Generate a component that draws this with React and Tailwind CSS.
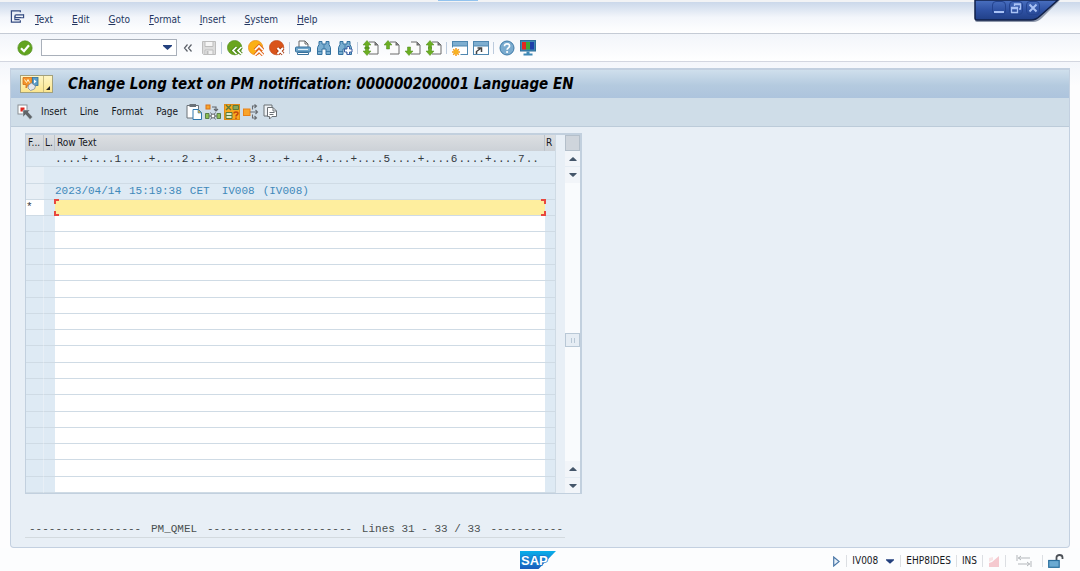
import React, { useState } from 'react'

const menuItems = ['Text', 'Edit', 'Goto', 'Format', 'Insert', 'System', 'Help']
const editorActions = ['Insert', 'Line', 'Format', 'Page']
const rulerMarks = ['1', '2', '3', '4', '5', '6', '7']
const EMPTY_ROWS = 17

const Icon = ({ children, className = 'h-4 w-4' }) => (
  <svg viewBox="0 0 16 16" className={className} fill="none" aria-hidden="true">
    {children}
  </svg>
)

const CheckIcon = () => (
  <Icon>
    <circle cx="8" cy="8" r="7.2" fill="#62a420" stroke="#4d8a1c" strokeWidth="0.6" />
    <path d="M4 8.2l3 3 5-6" stroke="#fff" strokeWidth="2.2" />
  </Icon>
)

const CollapseIcon = () => (
  <Icon>
    <path d="M7.5 4.5L4.5 8l3 3.5M11.5 4.5L8.5 8l3 3.5" stroke="#5b6068" strokeWidth="1.2" />
  </Icon>
)

const SaveIcon = () => (
  <Icon>
    <path d="M1.5 1.5h13v13h-12l-1-1z" fill="#dcdcdc" stroke="#bdbdbd" />
    <path d="M4 1.5h8v5H4z" fill="#f6f6f6" stroke="#bdbdbd" />
    <path d="M4 10h8v4.5H4z" fill="#f0f0f0" stroke="#bdbdbd" />
    <path d="M5.5 11h2v3h-2z" fill="#bdbdbd" />
  </Icon>
)

const BackIcon = () => (
  <Icon>
    <circle cx="7.6" cy="7.6" r="7.2" fill="#6aa51e" stroke="#4e8a1a" strokeWidth="0.6" />
    <path d="M9.5 7L6 10.5 9.5 14M14.5 7L11 10.5l3.5 3.5" stroke="#4e8a1a" strokeWidth="3.4" />
    <path d="M9.5 7L6 10.5 9.5 14M14.5 7L11 10.5l3.5 3.5" stroke="#fff" strokeWidth="1.7" />
  </Icon>
)

const ExitIcon = () => (
  <Icon>
    <circle cx="7.6" cy="7.6" r="7.2" fill="#fbb016" stroke="#e88a1a" strokeWidth="0.7" />
    <path d="M7 10l4-4 4 4M7 15l4-4 4 4" stroke="#e2661c" strokeWidth="3.4" />
    <path d="M7 10l4-4 4 4M7 15l4-4 4 4" stroke="#fff" strokeWidth="1.7" />
  </Icon>
)

const CancelIcon = () => (
  <Icon>
    <circle cx="7.6" cy="7.6" r="7.2" fill="#d9541a" stroke="#b8400f" strokeWidth="0.6" />
    <path d="M8.5 8l5.5 6M14 8l-5.5 6" stroke="#a93a10" strokeWidth="3.8" />
    <path d="M8.5 8l5.5 6M14 8l-5.5 6" stroke="#fff" strokeWidth="2" />
  </Icon>
)

const PrintIcon = () => (
  <Icon>
    <path d="M4 7V1h6l3 3v3" fill="#fff" stroke="#666" />
    <path d="M10 1v3h3" stroke="#666" />
    <rect x="0.5" y="7" width="15" height="5" rx="1" fill="#6fa5ca" stroke="#37719c" />
    <path d="M3 9.5h10" stroke="#dfeef8" />
    <path d="M2.5 12.5h11v2h-11z" fill="#fff" stroke="#37719c" />
  </Icon>
)

const FindIcon = ({ next }) => (
  <Icon>
    <path
      d="M3 1.5h3V4h4V1.5h3v3l1.5 3v7H10V9H6v5.5H1.5v-7l1.5-3z"
      fill="#79add0"
      stroke="#32719f"
    />
    <path d="M8 4.5V9M2 11.5h4M10 11.5h4" stroke="#32719f" strokeWidth="0.8" />
    {next && (
      <path d="M10 6.5h2.5V9H15v3h-2.5v2.5H10V12H7.5V9H10z" fill="#fff" stroke="#3d5fa3" />
    )}
  </Icon>
)

// Page navigation: up / down say which arrow heads are drawn
const PageIcon = ({ up, down, far }) => (
  <Icon>
    <path d="M6 2h6l3 3v9H6" fill="#fbfbfb" stroke="#6a6a6a" />
    <path d="M11.5 2v3.5H15z" fill="#6a6a6a" />
    {up && (
      <path d="M4 0.5L8 5H5.5v4h-3V5H0z" fill="#6cae22" stroke="#4d8a1c" strokeWidth="0.5" />
    )}
    {down && (
      <path d="M4 15.5L8 11H5.5V7h-3v4H0z" fill="#6cae22" stroke="#4d8a1c" strokeWidth="0.5" />
    )}
    {far && <path d="M1 8h6" stroke="#4d8a1c" />}
  </Icon>
)

const SessionIcon = () => (
  <Icon>
    <rect x="0.5" y="1.5" width="15" height="13" fill="#fff" stroke="#4f87b0" />
    <path d="M1 2h14v4H1z" fill="#7eaed0" />
    <path d="M0.5 6h15" stroke="#4f87b0" />
    <path d="M0 7.5h8.5V16H0z" fill="#fff" />
    <path d="M4 8v8M0 12h8M1.2 9.2l5.6 5.6M6.8 9.2l-5.6 5.6" stroke="#f29a1b" strokeWidth="1.5" />
    <circle cx="4" cy="12" r="2.2" fill="#f8b422" />
  </Icon>
)

const ShortcutIcon = () => (
  <Icon>
    <rect x="0.5" y="1.5" width="15" height="13" fill="#fff" stroke="#4f87b0" />
    <path d="M1 2h14v4H1z" fill="#7eaed0" />
    <path d="M0.5 6h15" stroke="#4f87b0" />
    <path d="M3.5 14v-2.5L7.5 8.5M4.5 8h4v4" stroke="#444" strokeWidth="1.5" />
  </Icon>
)

const HelpIcon = () => (
  <Icon>
    <circle cx="8" cy="8" r="7" fill="#7aabcf" stroke="#3f7ba8" />
    <path
      d="M5.5 6.2C5.5 4.5 6.6 3.8 8 3.8s2.6.8 2.6 2.2c0 1.8-2.5 1.9-2.5 3.7"
      stroke="#fff"
      strokeWidth="1.7"
    />
    <circle cx="8.1" cy="12" r="1.1" fill="#fff" />
  </Icon>
)

const MonitorIcon = () => (
  <Icon>
    <rect x="0.5" y="0.5" width="15" height="10.5" fill="#3f88b5" stroke="#2e6f99" />
    <path d="M2 2h4v7.5H2z" fill="#e5261f" />
    <path d="M6 2h4v7.5H6z" fill="#3fa535" />
    <path d="M10 2h4v7.5h-4z" fill="#1d3fa8" />
    <path d="M6.5 11.5h3v2h-3zM3.500 13.5h9v2h-9z" fill="#3f88b5" />
  </Icon>
)

const MenuToggleIcon = () => (
  <Icon className="h-[15px] w-[15px]">
    <path d="M11 2.5V1H1.500v12H11v-2" stroke="#334a80" strokeWidth="1.3" />
    <path d="M14.500 5.200H6.500q-1.300 0-1.300 1.500t1.300 1.500h6" stroke="#334a80" strokeWidth="1.300" />
    <path d="M5.200 7v3.200h5M14.500 4.600v3.600h-2" stroke="#334a80" strokeWidth="1.200" />
  </Icon>
)

const SelectIcon = () => (
  <Icon>
    <rect x="1" y="1" width="9" height="9" fill="#fff" stroke="#8a8f94" />
    <rect x="3.5" y="3.5" width="4" height="4" fill="#e0241c" />
    <path d="M6 6h7l-2 2 4.5 5-2.5 2.5-4.500-5L6 13z" fill="#5f6468" stroke="#cfdce6" strokeWidth="0.5" />
  </Icon>
)

const PasteIcon = () => (
  <Icon>
    <path d="M1 1.5h11.5V14H1z" fill="#fff" stroke="#6b7278" />
    <path d="M3.5 0H10v3H3.500z" fill="#6b7278" />
    <path d="M7 5.5h5.5l3 3v7H7z" fill="#fff" stroke="#2f79b0" />
    <path d="M12 5.5V9h3.5z" fill="#efb42c" stroke="#2f79b0" strokeWidth="0.6" />
  </Icon>
)

const StructureIcon = () => (
  <Icon>
    <rect x="1" y="1" width="4" height="4" fill="#f6a52a" stroke="#d9731a" />
    <path d="M7 3h4v3M9 5l2 2 2-2" stroke="#62676c" strokeWidth="1.2" />
    <path d="M0.5 9.5H4v5H0.500zM12 9.5h3.5v5H12z" fill="#8bbd53" stroke="#5b7f48" />
    <path d="M5.5 8.5l5 7M10.5 8.5l-5 7M4 12h8" stroke="#62676c" />
    <circle cx="8" cy="12" r="2" fill="#fff" stroke="#62676c" />
  </Icon>
)

const CheckTextIcon = () => (
  <Icon>
    <rect x="0.5" y="0.5" width="15" height="15" fill="#f7a91f" stroke="#e08a16" />
    <path d="M2 1l5 5M7 1L2 6" stroke="#5d7a3a" strokeWidth="1.4" />
    <path d="M9 1.5h5.5v4H9z" fill="#88a85a" stroke="#5d7a3a" />
    <path d="M2 8.5h6v6H2z" fill="#dfe9c7" stroke="#5d7a3a" />
    <path d="M2 11.5h6" stroke="#5d7a3a" />
    <path d="M10 9.5c0-2 4-2 4 0 0 1.5-2 1-2 3M12 13.5V15" stroke="#c4480f" strokeWidth="1.5" />
  </Icon>
)

const SplitIcon = () => (
  <Icon>
    <rect x="0.5" y="5" width="6.5" height="6.5" fill="#f9a42a" stroke="#e88118" />
    <path d="M7 8h7.500M12.500 6l2 2-2 2M9.500 5.500V2h4M11.500 0.500l2 1.500-2 2M9.500 10.500V14h4M11.500 12l2 2-2 1.500" stroke="#686d72" strokeWidth="1.1" />
  </Icon>
)

const DocumentsIcon = () => (
  <Icon>
    <path d="M2 1h8v11H2z" fill="#eef2f5" stroke="#6b7075" />
    <path d="M5.500 3.500H11l3.500 3.500v5.500H10L7.500 15v-2.500h-2z" fill="#fff" stroke="#6b7075" />
    <path d="M11 3.500V7h3.500M7.500 8.500h5M7.500 10.500h4" stroke="#6b7075" />
  </Icon>
)

const ObjectIcon = () => (
  <Icon className="h-4 w-[17px]">
    <path d="M0.5 1.5h9v7H6L3.500 12V8.500h-3z" fill="#f4952c" stroke="#cf6d18" strokeWidth="0.8" />
    <path d="M2 3.5l2 3 1.500-3 1.500 3" stroke="#fff2cc" />
    <rect x="10" y="1.5" width="5.5" height="8" fill="#5b9cc6" stroke="#2f6f9a" strokeWidth="0.8" />
    <path d="M11.5 3.5l2.5 2-2.5 2z" fill="#fff" />
    <path d="M6 9l3-2 4 3-1 3-4 1.500L5.500 12z" fill="#e3e6ec" stroke="#7f8b9a" strokeWidth="0.8" />
  </Icon>
)

const Triangle = ({ up, className = 'h-[5px] w-[9px]' }) => (
  <svg viewBox="0 0 9 5" className={className} aria-hidden="true">
    <path d={up ? 'M4.5 0L9 4v1H0V4z' : 'M0 0h9v1L4.5 5 0 1z'} fill="currentColor" />
  </svg>
)

const ToolButton = ({ label, children, className = 'w-[21px]' }) => (
  <button
    type="button"
    aria-label={label}
    className={`flex h-5 shrink-0 items-center justify-center ${className}`}
  >
    {children}
  </button>
)

const Separator = () => <span className="mx-[2px] h-3 w-px shrink-0 bg-[#bccbdd]" />

const WindowControls = () => (
  <div className="absolute top-0 right-[18px] h-[23px] w-[90px]">
    <svg viewBox="0 0 90 23" className="absolute inset-0 h-full w-full" aria-hidden="true">
      <defs>
        <linearGradient id="tab" x1="0" y1="0" x2="0" y2="1">
          <stop offset="0" stopColor="#4a70c0" />
          <stop offset="0.5" stopColor="#2f52a4" />
          <stop offset="1" stopColor="#203f87" />
        </linearGradient>
      </defs>
      <path d="M3 0v20q0 2 2 2h56q5 0 9-4L88 0z" fill="#8d97aa" />
      <path d="M3 0v18q0 2 2 2h54q5 0 9-4L86 0z" fill="url(#tab)" stroke="#10204a" strokeWidth="1.5" />
    </svg>
    <div className="relative flex gap-[3px] pt-px pl-[20px] text-[#a9c2f5]">
      <button type="button" aria-label="Minimize" className="h-[14px] w-[14px] rounded-sm border border-[#23438f]">
        <svg viewBox="0 0 12 12">
          <path d="M1 10h10" stroke="currentColor" strokeWidth="2" />
        </svg>
      </button>
      <button type="button" aria-label="Restore" className="h-[14px] w-[14px] rounded-sm border border-[#23438f]">
        <svg viewBox="0 0 12 12" fill="none" stroke="currentColor" strokeWidth="1.3">
          <path d="M1.5 5.5h6v5h-6zM1.500 6.500h6M4.500 4V2h6v5H9M4.500 2.500h6" />
        </svg>
      </button>
      <button type="button" aria-label="Close" className="h-[14px] w-[14px] rounded-sm border border-[#23438f]">
        <svg viewBox="0 0 12 12">
          <path d="M2.5 2.5l7 7M9.5 2.5l-7 7" stroke="currentColor" strokeWidth="2" />
        </svg>
      </button>
    </div>
  </div>
)

const MenuBar = () => (
  <nav className="flex h-[32px] items-center border-b border-[#c5cbd5] bg-linear-to-b from-[#cbd8ea] via-[#f3f6fb] to-white pt-[5px] pl-[10px] text-[#24365f]">
    <button type="button" aria-label="Menu" className="mr-[10px] mb-[6px]">
      <MenuToggleIcon />
    </button>
    <div className="flex gap-[19px]">
      {menuItems.map((item) => (
        <button key={item} type="button">
          <span className="underline">{item[0]}</span>
          {item.slice(1)}
        </button>
      ))}
    </div>
  </nav>
)

const SystemToolbar = () => {
  const [command, setCommand] = useState('')

  return (
    <div className="flex h-[28px] items-center border-b border-[#d3d6e0] bg-linear-to-b from-[#f2f5fa] to-white pl-[14px]">
      <ToolButton label="Enter">
        <CheckIcon />
      </ToolButton>
      <div className="ml-[6px] flex h-[17px] w-[136px] items-center border border-[#a9b0ba] bg-white">
        <input
          type="text"
          aria-label="Command"
          value={command}
          onChange={(e) => setCommand(e.target.value)}
          className="h-full min-w-0 flex-1 px-1 outline-none"
        />
        <button type="button" aria-label="Command history" className="px-1 text-[#24417e]">
          <Triangle />
        </button>
      </div>
      <ToolButton label="Collapse"><CollapseIcon /></ToolButton>
      <ToolButton label="Save"><SaveIcon /></ToolButton>
      <Separator />
      <ToolButton label="Back"><BackIcon /></ToolButton>
      <ToolButton label="Exit"><ExitIcon /></ToolButton>
      <ToolButton label="Cancel"><CancelIcon /></ToolButton>
      <Separator />
      <ToolButton label="Print"><PrintIcon /></ToolButton>
      <ToolButton label="Find"><FindIcon /></ToolButton>
      <ToolButton label="Find next"><FindIcon next /></ToolButton>
      <Separator />
      <ToolButton label="First page"><PageIcon up down far /></ToolButton>
      <ToolButton label="Previous page"><PageIcon up /></ToolButton>
      <ToolButton label="Next page"><PageIcon down /></ToolButton>
      <ToolButton label="Last page"><PageIcon up down /></ToolButton>
      <Separator />
      <ToolButton label="New session"><SessionIcon /></ToolButton>
      <ToolButton label="Create shortcut"><ShortcutIcon /></ToolButton>
      <Separator />
      <ToolButton label="Help"><HelpIcon /></ToolButton>
      <ToolButton label="Customize layout"><MonitorIcon /></ToolButton>
    </div>
  )
}

const TitleBar = () => (
  <div className="flex h-[28px] items-center bg-linear-to-b from-[#cfdfec] via-[#b4cadf] via-55% to-[#adc4dd] pl-[9px]">
    <button
      type="button"
      aria-label="Services for object"
      className="flex h-[18px] w-[33px] items-stretch border border-[#a3a17c] bg-linear-to-b from-[#fff6c4] to-[#fbe58e]"
    >
      <span className="flex flex-1 items-center border-r border-[#c9bd80] pl-px">
        <ObjectIcon />
      </span>
      <span className="flex w-[8px] items-end justify-center pb-[2px]">
        <svg viewBox="0 0 4 4" className="h-1 w-1">
          <path d="M4 0v4H0z" fill="#222" />
        </svg>
      </span>
    </button>
    <h1 className="ml-[15px] font-['DejaVu_Sans_Condensed','DejaVu_Sans',sans-serif] text-[15px] font-bold whitespace-nowrap text-black italic">
      Change Long text on PM notification: 000000200001 Language EN
    </h1>
  </div>
)

const EditorToolbar = () => (
  <div className="flex h-[29px] items-center border-b border-[#bccbd9] bg-[#cfdde8] pl-[3px] text-[#15181c]">
    <ToolButton label="Select"><SelectIcon /></ToolButton>
    <div className="mr-[7px] ml-[6px] flex gap-[13px]">
      {editorActions.map((action) => (
        <button key={action} type="button">{action}</button>
      ))}
    </div>
    <ToolButton label="Paste" className="w-[19px]"><PasteIcon /></ToolButton>
    <ToolButton label="Structure" className="w-[19px]"><StructureIcon /></ToolButton>
    <ToolButton label="Check text" className="w-[19px]"><CheckTextIcon /></ToolButton>
    <ToolButton label="Split" className="w-[19px]"><SplitIcon /></ToolButton>
    <ToolButton label="Documents" className="w-[19px]"><DocumentsIcon /></ToolButton>
  </div>
)

const cellLine = 'border-b border-[#cfdbe5] p-0'
const mono = "font-['Liberation_Mono',monospace] text-[11px]"

const TextTable = () => {
  const [line, setLine] = useState('')

  return (
    <table className="h-[358px] w-[530px] table-fixed border-separate border-spacing-0 border-r border-[#cfdbe5] leading-[14px]">
      <colgroup>
        <col className="w-[18px]" />
        <col className="w-[11px]" />
        <col />
        <col className="w-[10px]" />
      </colgroup>
      <thead>
        <tr className="h-4 bg-linear-to-b from-[#dcdfe2] to-[#ccd1d7] text-left text-[#15181c]">
          <th className="border-r border-[#bcc3ca] p-0 pl-[2px] font-normal">F...</th>
          <th className="border-r border-[#bcc3ca] p-0 pl-px font-normal">L.</th>
          <th className="border-r border-[#bcc3ca] p-0 pl-[2px] font-normal">Row Text</th>
          <th className="p-0 pl-px font-normal">R</th>
        </tr>
      </thead>
      <tbody className={`bg-[#deeaf4] ${mono}`}>
        <tr className="h-4">
          <td className={cellLine} />
          <td className={cellLine} />
          <td className={`${cellLine} text-[#33383d]`}>
            <div className="mr-[6px] flex justify-between">
              {rulerMarks.map((mark) => (
                <span key={mark}>....+....{mark}</span>
              ))}
              <span>..</span>
            </div>
          </td>
          <td className={cellLine} />
        </tr>
        <tr className="h-4">
          <td className={`${cellLine} bg-[#e8eff6]`} />
          <td className={cellLine} />
          <td className={cellLine} />
          <td className={cellLine} />
        </tr>
        <tr className="h-4">
          <td className={`${cellLine} bg-[#e8eff6]`} />
          <td className={cellLine} />
          <td className={`${cellLine} text-[#4189ba]`}>
            <div className="flex gap-2">
              <span>2023/04/14</span>
              <span>15:19:38</span>
              <span className="mr-1">CET</span>
              <span>IV008</span>
              <span>(IV008)</span>
            </div>
          </td>
          <td className={cellLine} />
        </tr>
        <tr className="h-4">
          <td className={`${cellLine} bg-white text-[#33383d]`}>*</td>
          <td className={cellLine} />
          <td className={`${cellLine} relative bg-[#feee9e]`}>
            <input
              type="text"
              aria-label="Row Text"
              value={line}
              onChange={(e) => setLine(e.target.value)}
              className="block h-[14px] w-full px-1 outline-none"
            />
            <span className="absolute -top-px -left-px h-[5px] w-[5px] border-t-2 border-l-2 border-[#e8483e]" />
            <span className="absolute -bottom-px -left-px h-[5px] w-[5px] border-b-2 border-l-2 border-[#e8483e]" />
            <span className="absolute -top-px -right-px h-[5px] w-[5px] border-t-2 border-r-2 border-[#e8483e]" />
            <span className="absolute -right-px -bottom-px h-[5px] w-[5px] border-r-2 border-b-2 border-[#e8483e]" />
          </td>
          <td className={cellLine} />
        </tr>
        {Array.from({ length: EMPTY_ROWS }, (_, index) => (
          <tr key={index} className="h-4">
            <td className={`${cellLine} border-r border-r-[#e8eff6]`} />
            <td className={cellLine} />
            <td className={`${cellLine} bg-white`} />
            <td className={cellLine} />
          </tr>
        ))}
      </tbody>
    </table>
  )
}

const ScrollBar = () => (
  <div className="ml-[9px] flex w-[15px] flex-col items-stretch bg-[#f9fbfd] text-[#45566a]">
    <button type="button" aria-label="Table settings" className="h-[16px] border border-[#b4bfca] bg-[#cfd5dc]" />
    <button type="button" aria-label="Line up" className="flex h-[16px] items-center justify-center border-b border-[#e4ebf2] bg-[#f2f5f9]">
      <Triangle up className="h-1 w-2" />
    </button>
    <button type="button" aria-label="Line down" className="flex h-[16px] items-center justify-center bg-[#f2f5f9]">
      <Triangle className="h-1 w-2" />
    </button>
    <div className="flex flex-1 flex-col justify-center pt-[36px]">
      <div className="flex h-[14px] items-center justify-center gap-[2px] border border-[#b9c8d6] bg-[#e6edf4]">
        <span className="h-[5px] w-px bg-[#b9c8d6]" />
        <span className="h-[5px] w-px bg-[#b9c8d6]" />
      </div>
    </div>
    <button type="button" aria-label="Page up" className="flex h-[16px] items-center justify-center bg-[#f2f5f9]">
      <Triangle up className="h-1 w-2" />
    </button>
    <button type="button" aria-label="Page down" className="flex h-[16px] items-center justify-center border-t border-[#e4ebf2] bg-[#f2f5f9]">
      <Triangle className="h-1 w-2" />
    </button>
  </div>
)

const PositionLine = () => (
  <div className={`mt-[27px] flex w-[540px] justify-between border-b border-[#d3dadf] pr-[2px] pl-[4px] leading-4 whitespace-pre text-[#4a4f50] ${mono}`}>
    <span>{'-'.repeat(17)}</span>
    <span>PM_QMEL</span>
    <span>{'-'.repeat(22)}</span>
    <span>Lines 31 - 33 / 33</span>
    <span>{'-'.repeat(11)}</span>
  </div>
)

const SapLogo = () => (
  <svg viewBox="0 0 36 18" className="h-[18px] w-9" role="img" aria-label="SAP">
    <defs>
      <linearGradient id="sap" x1="0" y1="0" x2="0" y2="1">
        <stop offset="0" stopColor="#09aeea" />
        <stop offset="1" stopColor="#1c5cbb" />
      </linearGradient>
    </defs>
    <path d="M0 0h36L18.500 18H0z" fill="url(#sap)" />
    <text
      x="1"
      y="14"
      fill="#fff"
      stroke="#1a78cc"
      strokeWidth="1.5"
      paintOrder="stroke"
      fontFamily="Liberation Sans, sans-serif"
      fontSize="13"
      fontWeight="700"
    >
      SAP
    </text>
  </svg>
)

const StatusDivider = () => <span className="h-3 w-px bg-[#dcdfe3]" />

const StatusBar = () => (
  <footer className="relative flex h-[23px] items-center justify-end pt-[3px] pr-4 text-[#15181c]">
    <div className="absolute top-[3px] left-[520px]">
      <SapLogo />
    </div>
    <button type="button" aria-label="Expand status" className="mr-[6px]">
      <svg viewBox="0 0 7 11" className="h-[11px] w-[7px]">
        <path d="M0.7 1v9l5.5-4.500z" fill="#e6eff8" stroke="#4b78a8" strokeWidth="1.2" />
      </svg>
    </button>
    <StatusDivider />
    <label className="relative mr-[6px] ml-[5px] flex items-center">
      <select aria-label="Session user" className="w-[42px] appearance-none outline-none">
        <option>IV008</option>
      </select>
      <span className="pointer-events-none absolute right-0 text-[#24417e]">
        <Triangle className="h-[5px] w-2" />
      </span>
    </label>
    <StatusDivider />
    <span className="mx-[5px]">EHP8IDES</span>
    <StatusDivider />
    <span className="mx-[5px]">INS</span>
    <StatusDivider />
    <svg viewBox="0 0 10 11" className="mx-[6px] h-[11px] w-[10px]" aria-hidden="true">
      <path d="M0 11V7l3-1 7-6v11z" fill="#f5c9cf" />
      <path d="M0 6V2l4-1v3z" fill="#f8e4e6" />
    </svg>
    <StatusDivider />
    <svg viewBox="0 0 16 12" className="mx-[10px] h-3 w-4" fill="none" stroke="#b3b7bb" aria-hidden="true">
      <path d="M1 0v6M2 3h12M5 1L2.500 3 5 5M15 6v6M2 9h12M11 7l2.500 2L11 11" />
    </svg>
    <StatusDivider />
    <svg viewBox="0 0 16 14" className="ml-[5px] h-[14px] w-4" fill="none" aria-hidden="true">
      <path d="M8.5 7V3.500Q8.500 1 11.500 1t3 2.500V5" stroke="#4c5157" strokeWidth="1.8" />
      <rect x="0.7" y="6.5" width="10.5" height="6.8" fill="#6aaad2" stroke="#2a6f9e" strokeWidth="1.2" />
    </svg>
  </footer>
)

const App = () => {
  return (
    <div className="relative flex min-h-screen flex-col bg-[#fcfdfe] font-['DejaVu_Sans_Condensed','DejaVu_Sans',sans-serif] text-[10px] leading-4">
      <div className="flex h-[2px] bg-[#f2f3f5]">
        <span className="ml-[438px] h-px w-10 bg-[#93c3ee]" />
      </div>
      <MenuBar />
      <SystemToolbar />
      <WindowControls />
      <main className="flex flex-1 flex-col bg-linear-to-b from-[#f4f6fb] to-[#fdfdfe] to-5% px-[10px] pt-[6px]">
        <section className="flex-1 rounded-b-sm border border-t-2 border-[#c3d0e0] bg-[#e8eff6]">
          <TitleBar />
          <EditorToolbar />
          <div className="pt-[6px] pl-[14px]">
            <div className="flex w-[557px] border border-t-2 border-r-2 border-[#c2d0de]">
              <TextTable />
              <ScrollBar />
            </div>
            <PositionLine />
          </div>
        </section>
      </main>
      <StatusBar />
    </div>
  )
}

export default App
